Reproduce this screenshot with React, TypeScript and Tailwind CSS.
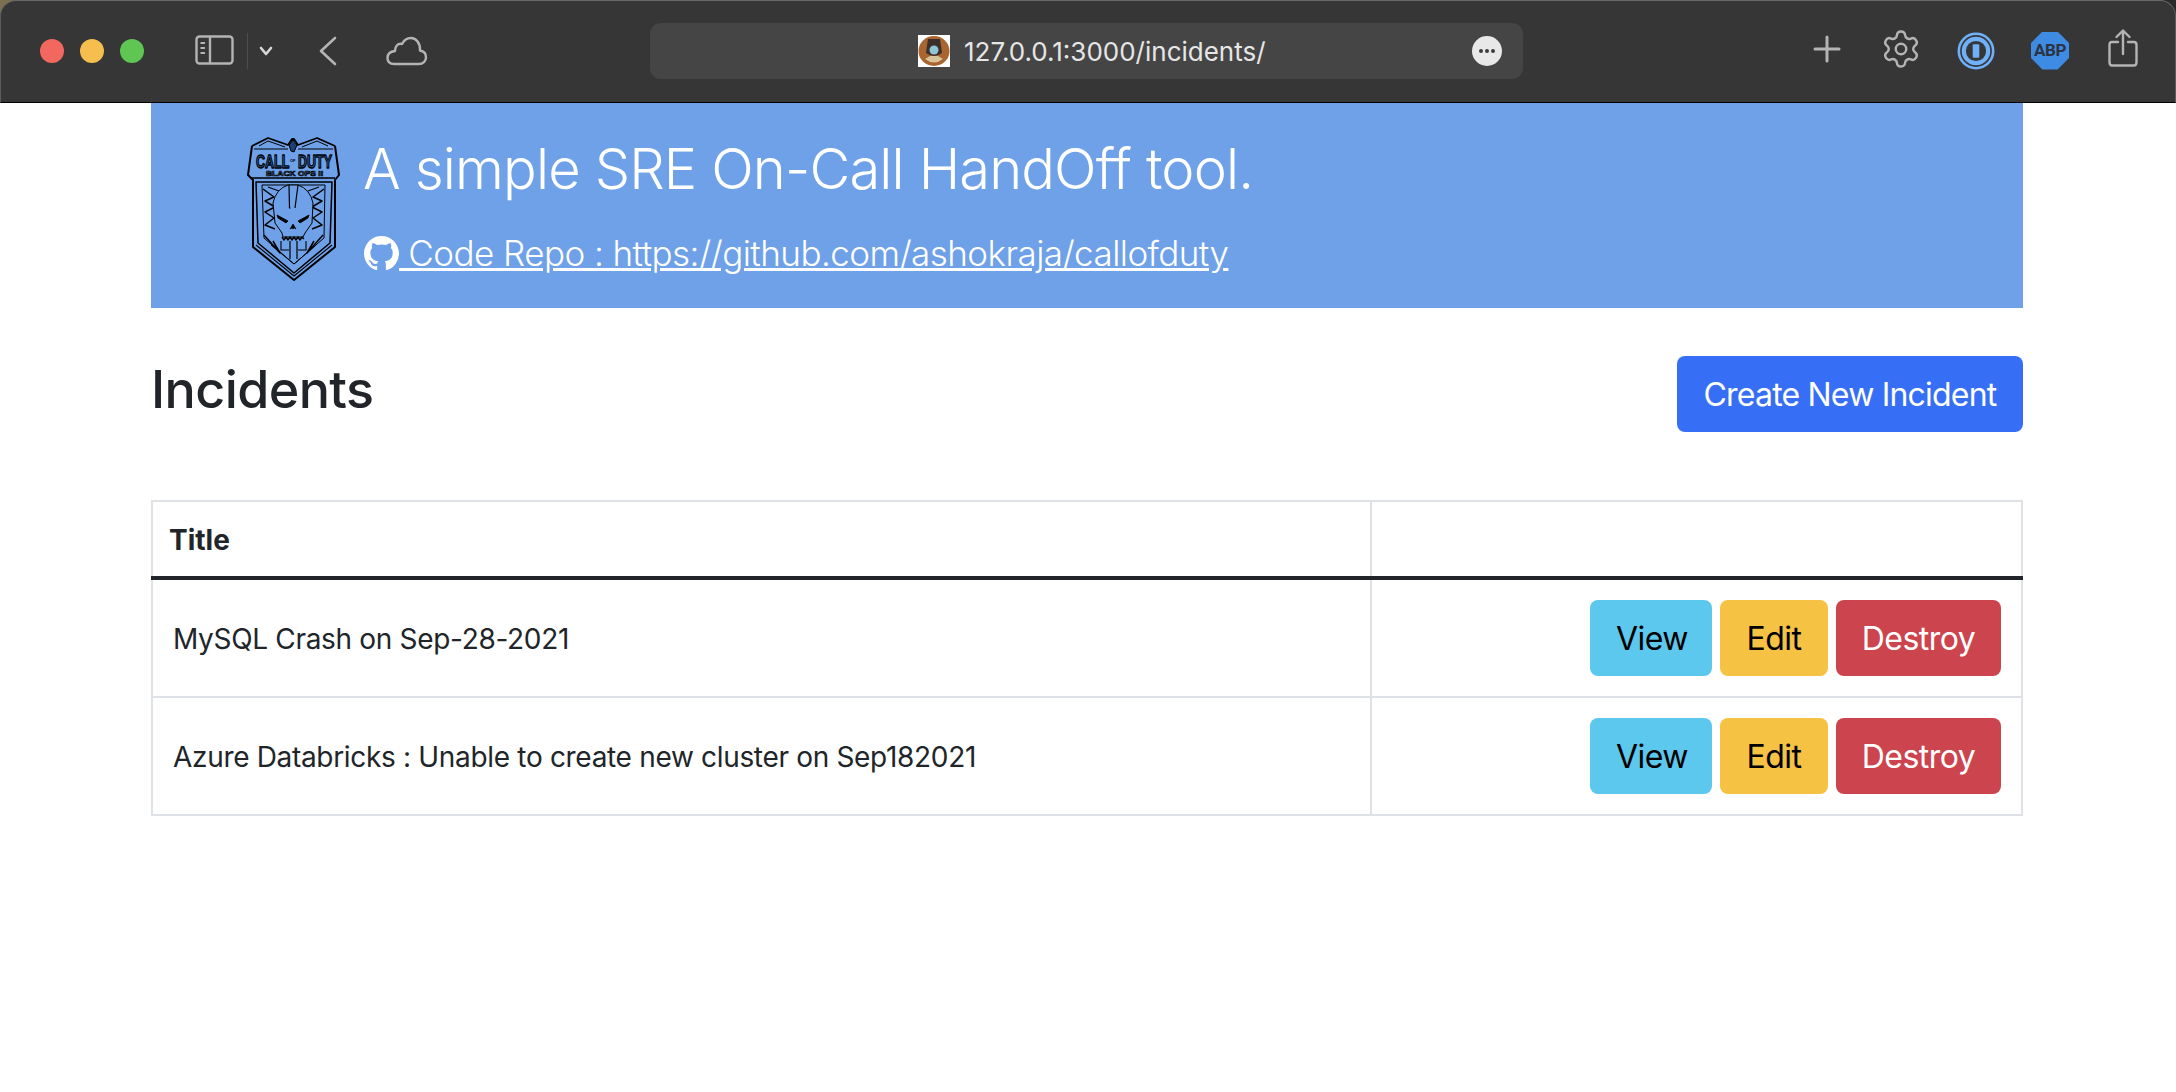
import { BsGithub } from "react-icons/bs";
import { Settings } from "lucide-react";

const rows = [
  "MySQL Crash on Sep-28-2021",
  "Azure Databricks : Unable to create new cluster on Sep182021",
];

const Shield = () => (
  <svg width="93" height="145" viewBox="0 0 93 145" fill="none" stroke="#000" strokeWidth="1.5" strokeLinejoin="round" className="shrink-0">
    {/* wings on top */}
    <path d="M5 9 L21 1 L41 8 L45 2 L47 2 L51 8 L70 1 L88 9" strokeWidth="1.8" />
    <path d="M7 12 L41 12 M51 12 L86 12 M12 9 L21 4 L38 10 M55 10 L70 4 L81 9" strokeWidth="1" />
    <path d="M42 8 L46 3 L50 8 L47 15 L44 14 Z" fill="#1d3f73" strokeWidth="1" />
    {/* outer body */}
    <path d="M5 9 L1 38 L6 43 L6 110 L47 143 L88 110 L88 43 L92 38 L88 9" strokeWidth="2" />
    <path d="M9 108 L47 139 L85 108" strokeWidth="1.1" />
    <path d="M5 41 L88 41" strokeWidth="1.3" />
    {/* logo text */}
    <text x="9" y="20.5" transform="scale(1 1.5)" fontFamily="'Liberation Sans', sans-serif" fontSize="12.5" fontWeight="700" fill="#2b5fa8" stroke="#000" strokeWidth="0.9">CALL</text>
    <text x="43" y="25" fontFamily="'Liberation Sans', sans-serif" fontSize="4" fontWeight="700" fill="#000" stroke="none">OF</text>
    <text x="51" y="20.5" transform="scale(1 1.5)" fontFamily="'Liberation Sans', sans-serif" fontSize="12.5" fontWeight="700" fill="#2b5fa8" stroke="#000" strokeWidth="0.9">DUTY</text>
    <text x="19" y="38.5" fontFamily="'Liberation Sans', sans-serif" fontSize="7" fontWeight="700" fill="#6fa1e8" stroke="#000" strokeWidth="0.7" textLength="57" lengthAdjust="spacingAndGlyphs">BLACK OPS II</text>
    {/* inner frame */}
    <path d="M9 45 L85 45 L83 106 L47 136 L11 106 Z" strokeWidth="1.5" />
    <path d="M15 48 L78 48 L77 101 L47 127 L17 101 Z" strokeWidth="1" />
    {/* zigzag sides */}
    <path d="M16 52 L27 60 L18 64 L28 70 L18 75 L27 81 L18 88 L28 92" strokeWidth="1.5" />
    <path d="M77 52 L66 60 L75 64 L65 70 L75 75 L66 81 L75 88 L65 92" strokeWidth="1.5" />
    <path d="M21 50 L32 54 M72 50 L61 54" strokeWidth="1.2" />
    {/* skull */}
    <path d="M41 48 L51 48 Q63 52 66 66 L65 86 L58 96 L56 100 L36 100 L35 96 L28 86 L26 66 Q29 52 41 48 Z" fill="#6fa1e8" strokeWidth="1" />
    <path d="M42 48 L42.5 71 L43.5 71 M51 48 L48 71" strokeWidth="1.2" />
    <path d="M30 78 L41 84 L39 86 L31 81 Z M62 78 L51 84 L53 86 L61 81 Z" fill="#000" strokeWidth="0.8" />
    <path d="M46 87 L49 92 L47 91 L46 92 L45 91 L43 92 Z" fill="#000" strokeWidth="0.6" />
    <path d="M35 100 L37 103 L39 100 L41 103 L43 100 L45 103 L47 100 L49 103 L51 100 L53 103 L55 100 L57 102" strokeWidth="1.4" />
    {/* lower spikes */}
    <path d="M17 98 L33 116 L26 104 M76 98 L60 116 L67 104" strokeWidth="1.5" />
    <path d="M34 104 L34 113 L42 113 M59 104 L59 113 L51 113" strokeWidth="1.1" />
    <path d="M43 104 L43 122 M50 104 L50 122" strokeWidth="1.2" />
    <path d="M24 108 L47 127 L69 108" strokeWidth="1" />
  </svg>
);

const Toolbar = () => (
  <div className="bg-[linear-gradient(90deg,#7b7150_50%,#2a2a2a_50%)]">
    <div className="flex h-[103px] items-center rounded-t-[16px] border-x border-t border-b border-x-[#5c5c5c] border-t-[#6a6a6a] border-b-black bg-[#363636] pb-[2px] pl-[39px]">
      <span className="h-6 w-6 rounded-full bg-[#f2685f]" />
      <span className="ml-4 h-6 w-6 rounded-full bg-[#f6bd4f]" />
      <span className="ml-4 h-6 w-6 rounded-full bg-[#5fc553]" />
      <svg width="40" height="31" viewBox="0 0 40 31" fill="none" stroke="#b4b4b4" strokeWidth="2.4" className="ml-[51px]">
        <rect x="1.5" y="1.5" width="36" height="27" rx="3" />
        <path d="M15 2 V28" />
        <path d="M5.5 8 H10 M5.5 13 H10 M5.5 18 H10" strokeWidth="2" />
      </svg>
      <span className="ml-[12px] h-9 w-px bg-[#4d4d4d]" />
      <svg width="14" height="10" viewBox="0 0 14 10" fill="none" stroke="#d8d8d8" strokeWidth="2.6" strokeLinecap="round" strokeLinejoin="round" className="ml-[11px]">
        <path d="M2 2 L7 8 L12 2" />
      </svg>
      <svg width="18" height="30" viewBox="0 0 18 30" fill="none" stroke="#b4b4b4" strokeWidth="2.6" strokeLinecap="round" strokeLinejoin="round" className="ml-[46px]">
        <path d="M16 2 L2 15 L16 28" />
      </svg>
      <svg width="42" height="30" viewBox="0 0 42 30" fill="none" stroke="#b4b4b4" strokeWidth="2.4" strokeLinejoin="round" className="ml-[49px]">
        <path d="M8 28 H33 C37 28 40 25 40 21.5 C40 17.5 37.5 15 34 14.5 C34.5 7 30 2 25 2 C21 2 18 4 16 8 C12 7 9 10 9 15 C4.5 15.5 1.5 18 1.5 22 C1.5 26 4 28 8 28 Z" />
      </svg>

      {/* address bar */}
      <div className="ml-[222px] flex h-[56px] w-[873px] items-center rounded-[11px] bg-[#454545] pl-[268px]">
        <svg width="32" height="32" viewBox="0 0 32 32" className="shrink-0">
          <rect width="32" height="32" fill="#fff" />
          <ellipse cx="16" cy="16" rx="15.5" ry="15" fill="#a8652f" />
          <path d="M10 4 H22 L24 18 Q16 24 8 18 Z" fill="#3a2f2a" />
          <circle cx="16" cy="15" r="4.5" fill="#8fc5d6" />
          <path d="M7 24 Q16 31 25 24 L20 21 H12 Z" fill="#d9c49a" />
        </svg>
        <span className="mt-[3px] ml-[14px] font-['Inter',sans-serif] text-[26px] leading-none whitespace-nowrap text-[#e6e6e6]">127.0.0.1:3000/incidents/</span>
        <span className="mr-[21px] ml-auto flex h-[30px] w-[30px] items-center justify-center gap-[2px] rounded-full bg-[#e8e8e8]">
          <i className="h-[4px] w-[4px] rounded-full bg-[#3c3c3c]" />
          <i className="h-[4px] w-[4px] rounded-full bg-[#3c3c3c]" />
          <i className="h-[4px] w-[4px] rounded-full bg-[#3c3c3c]" />
        </span>
      </div>

      <svg width="28" height="28" viewBox="0 0 28 28" stroke="#b4b4b4" strokeWidth="3" strokeLinecap="round" className="mb-[4px] ml-[290px]">
        <path d="M14 2 V26 M2 14 H26" />
      </svg>
      <Settings size={42} strokeWidth={1.4} className="mb-[4px] ml-[39px] text-[#b4b4b4]" />
      <svg width="38" height="38" viewBox="0 0 38 38" fill="none" className="ml-[35px]">
        <circle cx="19" cy="19" r="17.2" stroke="#6fb0f9" strokeWidth="2.6" />
        <circle cx="19" cy="19" r="12.2" stroke="#6fb0f9" strokeWidth="4.2" />
        <rect x="15.7" y="12.3" width="6.6" height="13.4" rx="1" fill="#6fb0f9" />
      </svg>
      <div className="ml-[36px] flex h-[38px] w-[38px] items-center justify-center bg-[#3e8be4] [clip-path:polygon(30%_0,70%_0,100%_30%,100%_70%,70%_100%,30%_100%,0_70%,0_30%)]">
        <span className="font-['Roboto',sans-serif] text-[17px] leading-none font-bold tracking-[-0.4px] text-[#2c3340]">ABP</span>
      </div>
      <svg width="30" height="38" viewBox="0 0 30 38" fill="none" stroke="#b4b4b4" strokeWidth="2.4" strokeLinecap="round" strokeLinejoin="round" className="mb-[5px] ml-[39px]">
        <path d="M10 13 H4 Q1.5 13 1.5 16 V33 Q1.5 36.5 4 36.5 H26 Q28.5 36.5 28.5 33 V16 Q28.5 13 26 13 H20" />
        <path d="M15 25 V2 M8.5 8 L15 1.5 L21.5 8" />
      </svg>
    </div>
  </div>
);

const ActionButton = ({ label, className }: { label: string; className: string }) => (
  <a href="#" className={`flex h-[76px] items-center justify-center rounded-[8px] pt-[1px] text-[32px] leading-none tracking-[-0.5px] ${className}`}>
    {label}
  </a>
);

export default function App() {
  return (
    <div className="min-h-[1092px] bg-white font-['Inter',sans-serif] text-[#212529]">
      <Toolbar />
      <div className="mx-[151px] w-[1872px]">
        {/* banner */}
        <div className="flex h-[205px] bg-[#6fa1e8] pl-[96px] pt-[34px] text-white">
          <Shield />
          <div className="ml-[24px]">
            <h1 className="mt-[-8px] ml-[-1px] text-[56px] leading-[80px] font-light tracking-[-0.85px] whitespace-nowrap">A simple SRE On-Call HandOff tool.</h1>
            <a href="#" className="mt-[19px] flex items-center text-[35px] leading-[50px] font-light tracking-[-0.55px] whitespace-pre underline">
              <BsGithub className="h-[35px] w-[35px]" />
              <span> Code Repo : https://github.com/ashokraja/callofduty</span>
            </a>
          </div>
        </div>

        {/* heading row */}
        <div className="mt-[48px] flex items-start justify-between">
          <h2 className="mt-[-2px] text-[52px] leading-[72px] font-medium tracking-[-0.6px]">Incidents</h2>
          <a href="#" className="flex h-[76px] w-[346px] items-center justify-center rounded-[8px] bg-[#366ff6] pt-[2px] text-[32px] leading-none tracking-[-0.8px] text-white">
            Create New Incident
          </a>
        </div>

        {/* table */}
        <table className="mt-[68px] w-full table-fixed border-collapse border-2 border-[#dee2e6]">
          <thead>
            <tr className="h-[77px] border-b-4 border-[#212529]">
              <th className="border-x-2 border-[#dee2e6] pt-[2px] pl-[16px] text-left text-[28px] font-bold">Title</th>
              <th className="w-[651px] border-x-2 border-[#dee2e6]" />
            </tr>
          </thead>
          <tbody>
            {rows.map((title) => (
              <tr key={title} className="h-[118px] border-b-2 border-[#dee2e6] first:h-[119px]">
                <td className="border-x-2 border-[#dee2e6] pt-[2px] pl-[20px] text-[28px] tracking-[-0.32px] whitespace-nowrap text-[#212529]">{title}</td>
                <td className="border-x-2 border-[#dee2e6] pr-[20px]">
                  <div className="flex justify-end gap-[8px]">
                    <ActionButton label="View" className="w-[122px] bg-[#5dc8ee] pl-[2px] text-black" />
                    <ActionButton label="Edit" className="w-[108px] bg-[#f6c244] text-black" />
                    <ActionButton label="Destroy" className="w-[165px] bg-[#cc444d] text-white" />
                  </div>
                </td>
              </tr>
            ))}
          </tbody>
        </table>
      </div>
    </div>
  );
}
